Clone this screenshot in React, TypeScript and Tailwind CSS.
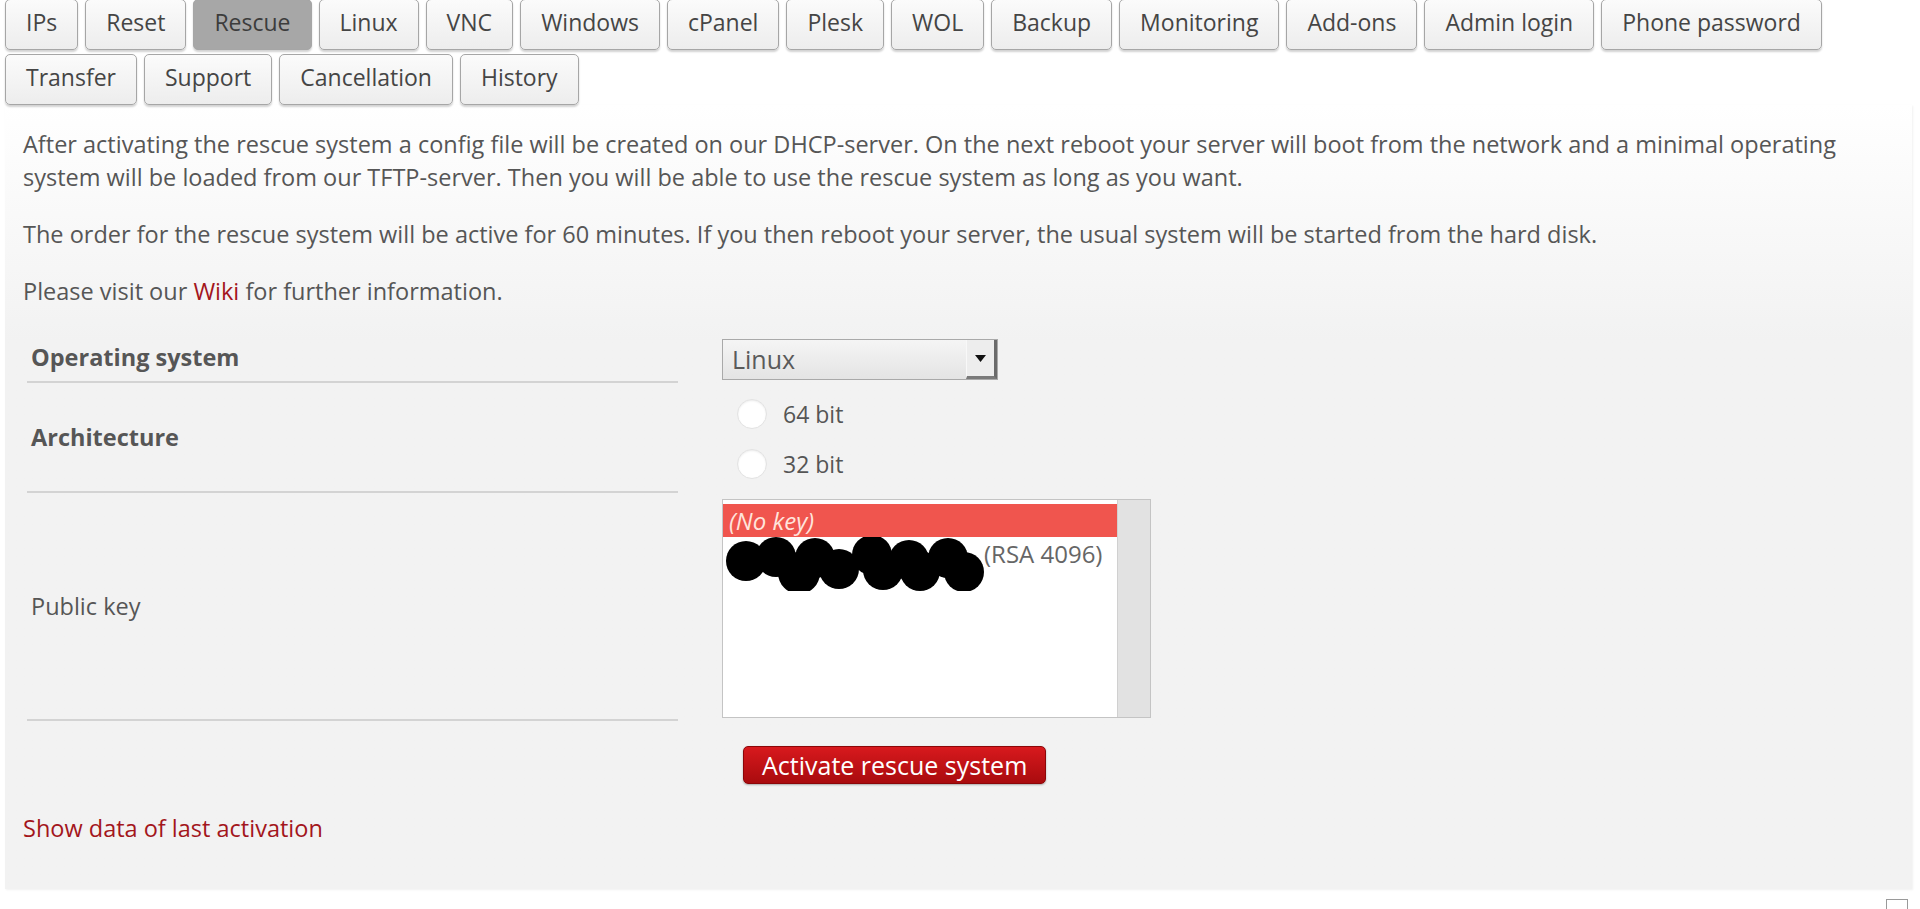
import clsx from "clsx";

const firstRow = [
  "IPs",
  "Reset",
  "Rescue",
  "Linux",
  "VNC",
  "Windows",
  "cPanel",
  "Plesk",
  "WOL",
  "Backup",
  "Monitoring",
  "Add-ons",
  "Admin login",
  "Phone password",
];
const secondRow = ["Transfer", "Support", "Cancellation", "History"];

// redaction scribble over the key name
const blobs = [
  [20, 24, 20],
  [50, 20, 20],
  [73, 36, 21],
  [89, 21, 20],
  [113, 32, 20],
  [146, 18, 20],
  [157, 33, 20],
  [183, 23, 20],
  [194, 34, 20],
  [222, 21, 20],
  [238, 35, 20],
];

function Tab({ label, active }: { label: string; active?: boolean }) {
  return (
    <a
      href="#"
      className={clsx(
        "block h-[51px] rounded-[5px] border border-[#a6a6a6] px-[20px] pt-[7px] text-[23px] leading-[31px] shadow-[0_2px_2px_rgba(0,0,0,0.18)]",
        active
          ? "bg-[#a7a7a7] text-[#3c3c3c]"
          : "bg-linear-to-b from-[#fbfbfb] to-[#ededed] text-[#454545]"
      )}
    >
      {label}
    </a>
  );
}

function Radio({ label }: { label: string }) {
  return (
    <label className="flex h-[50px] items-center gap-[16px] pl-[15px]">
      <span className="h-[30px] w-[30px] rounded-full border border-[#e2e2e2] bg-white shadow-[inset_0_1px_2px_rgba(0,0,0,0.08)]" />
      <span className="text-[23px] text-[#555]">{label}</span>
    </label>
  );
}

export default function App() {
  return (
    <div className="min-h-[909px] bg-white font-['Open_Sans',sans-serif] text-[#565656]">
      <nav className="-mt-[1px] ml-[5px] flex flex-col gap-[4px]">
        <div className="flex gap-[7px]">
          {firstRow.map((t) => (
            <Tab key={t} label={t} active={t === "Rescue"} />
          ))}
        </div>
        <div className="flex gap-[7px]">
          {secondRow.map((t) => (
            <Tab key={t} label={t} />
          ))}
        </div>
      </nav>

      <section className="ml-[5px] mr-[8px] bg-linear-to-b from-white to-[#f2f2f2] to-30% px-[18px] pb-[44px] pt-[23px] text-[23.5px] leading-[33px] shadow-[1px_1px_2px_rgba(0,0,0,0.06)]">
        <p>
          After activating the rescue system a config file will be created on our DHCP-server. On the next reboot
          your server will boot from the network and a minimal operating system will be loaded from our TFTP-server.
          Then you will be able to use the rescue system as long as you want.
        </p>
        <p className="mt-[24px]">
          The order for the rescue system will be active for 60 minutes. If you then reboot your server, the usual
          system will be started from the hard disk.
        </p>
        <p className="mt-[24px]">
          Please visit our{" "}
          <a href="#" className="text-[#a3161c]">
            Wiki
          </a>{" "}
          for further information.
        </p>

        <div className="mt-[23px] ml-[4px] grid grid-cols-[651px_1fr] gap-x-[44px]">
          <div className="flex h-[52px] items-center border-b-2 border-[#d3d3d3] pl-[4px] pt-[2px] font-bold">
            Operating system
          </div>
          <div className="pt-[8px]">
            <div className="flex h-[41px] w-[276px] items-center justify-between border border-[#a9a9a9] bg-linear-to-b from-[#f5f5f5] to-[#e4e4e4] pl-[9px] text-[25px] text-[#5a5a5a]">
              <span>Linux</span>
              <span className="flex h-full w-[31px] items-center justify-center border-l border-[#f8f8f8] border-r-[3px] border-b-[3px] border-r-[#6a6a6a] border-b-[#7a7a7a] bg-[#ededed]">
                <svg width="11" height="7" viewBox="0 0 11 7">
                  <path d="M0 0h11L5.5 7z" fill="#111" />
                </svg>
              </span>
            </div>
          </div>

          <div className="flex h-[110px] items-center border-b-2 border-[#d3d3d3] pl-[4px] font-bold">
            Architecture
          </div>
          <div className="pt-[6px]">
            <Radio label="64 bit" />
            <Radio label="32 bit" />
          </div>

          <div className="flex h-[228px] items-center border-b-2 border-[#d3d3d3] pl-[4px]">Public key</div>
          <div className="pt-[6px]">
            <div className="flex h-[219px] w-[429px] border border-[#c4c4c4] bg-white text-[24px]">
              <div className="flex-1 pt-[4px]">
                <div className="bg-[#f0554e] pl-[6px] italic leading-[33px] text-[#ffe4dc]">(No key)</div>
                <div className="flex items-start pl-[3px] leading-[33px] text-[#666]">
                  <svg width="260" height="54" viewBox="0 0 260 54" className="-mr-[2px] shrink-0">
                    {blobs.map(([cx, cy, r], i) => (
                      <circle key={i} cx={cx} cy={cy} r={r} fill="#000" />
                    ))}
                  </svg>
                  <span>(RSA 4096)</span>
                </div>
              </div>
              <div className="w-[33px] border-l border-[#d0d0d0] bg-[#e2e2e2]" />
            </div>
          </div>

          <div />
          <div className="pt-[25px] pl-[21px]">
            <button className="h-[38px] rounded-[5px] border border-[#8c0608] bg-linear-to-b from-[#d8191d] to-[#a90b0e] px-[18px] text-[25px] leading-[33px] text-white shadow-[0_1px_2px_rgba(0,0,0,0.3)]">
              Activate rescue system
            </button>
          </div>
        </div>

        <a href="#" className="mt-[28px] block text-[#a3161c]">
          Show data of last activation
        </a>
      </section>

      <div className="mr-[12px] mt-[10px] flex justify-end">
        <div className="h-[22px] w-[22px] border border-[#9a9a9a] bg-white" />
      </div>
    </div>
  );
}
